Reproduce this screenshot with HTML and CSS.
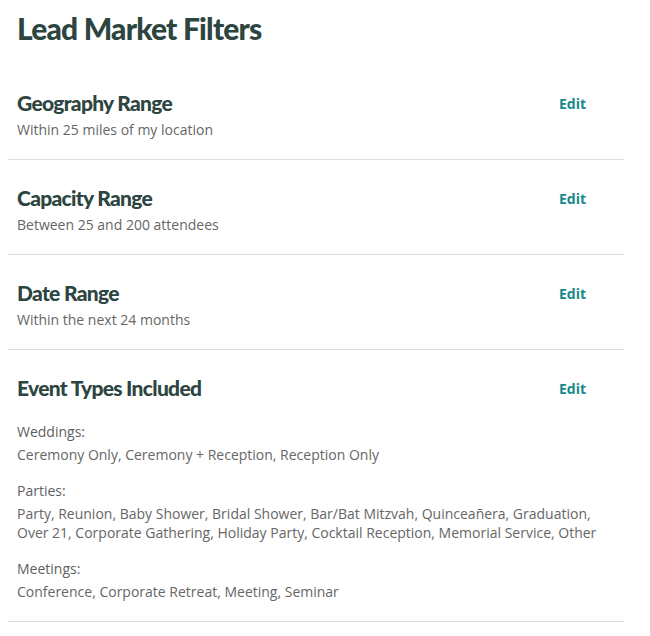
FILE: index.html
```html
<!DOCTYPE html>
<html lang="en">
<head>
    <meta charset="UTF-8">
    <meta name="viewport" content="width=device-width, initial-scale=1.0">
    <title>Lead Market Filters</title>
    <link rel="stylesheet" href="styles.css">
</head>
<body>
    <div class="filters">
        <h1 class="page-title">Lead Market Filters</h1>

        <div class="filter">
            <div class="filter-head">
                <h2>Geography Range</h2>
                <a href="#" class="edit">Edit</a>
            </div>
            <p class="value">Within 25 miles of my location</p>
        </div>

        <div class="filter">
            <div class="filter-head">
                <h2>Capacity Range</h2>
                <a href="#" class="edit">Edit</a>
            </div>
            <p class="value">Between 25 and 200 attendees</p>
        </div>

        <div class="filter">
            <div class="filter-head">
                <h2>Date Range</h2>
                <a href="#" class="edit">Edit</a>
            </div>
            <p class="value">Within the next 24 months</p>
        </div>

        <div class="filter">
            <div class="filter-head">
                <h2>Event Types Included</h2>
                <a href="#" class="edit">Edit</a>
            </div>
            <div class="group">
                <div class="group-label">Weddings:</div>
                <p class="value">Ceremony Only, Ceremony + Reception, Reception Only</p>
            </div>
            <div class="group">
                <div class="group-label">Parties:</div>
                <p class="value">Party, Reunion, Baby Shower, Bridal Shower, Bar/Bat Mitzvah, Quinceañera, Graduation, Over 21, Corporate Gathering, Holiday Party, Cocktail Reception, Memorial Service, Other</p>
            </div>
            <div class="group">
                <div class="group-label">Meetings:</div>
                <p class="value">Conference, Corporate Retreat, Meeting, Seminar</p>
            </div>
        </div>
    </div>
</body>
</html>
```

FILE: styles.css
```css
body {
    margin: 8px;
    font-family: "Open Sans", Arial, sans-serif;
    background-color: #fff;
    color: #666;
}

.filters {
    width: 616px;
}

.page-title {
    margin: 0 0 17px;
    padding: 1px 9px 1px;
    font-family: Lato, Arial, sans-serif;
    font-weight: 900;
    font-size: 30px;
    letter-spacing: -0.8px;
    line-height: 38px;
    color: #2d4540;
}

.filter {
    padding: 25px 9px 20px;
    border-bottom: 1px solid #ddd;
}

.filter-head {
    display: flex;
    justify-content: space-between;
    align-items: center;
    padding-right: 29px;
}

.filter-head h2 {
    margin: 0;
    font-family: Lato, Arial, sans-serif;
    font-weight: 900;
    font-size: 21px;
    letter-spacing: -0.7px;
    line-height: 26px;
    color: #2d4540;
}

.edit {
    font-size: 14px;
    font-weight: 700;
    color: #17898b;
    text-decoration: none;
}

.value {
    margin: 4px 0 0;
    font-size: 14px;
    line-height: 19px;
    color: #666;
}

.group {
    margin-top: 17px;
}

.filter-head + .group {
    margin-top: 21px;
}

.group-label {
    font-size: 14px;
    line-height: 19px;
    color: #5f5f5f;
}
```
